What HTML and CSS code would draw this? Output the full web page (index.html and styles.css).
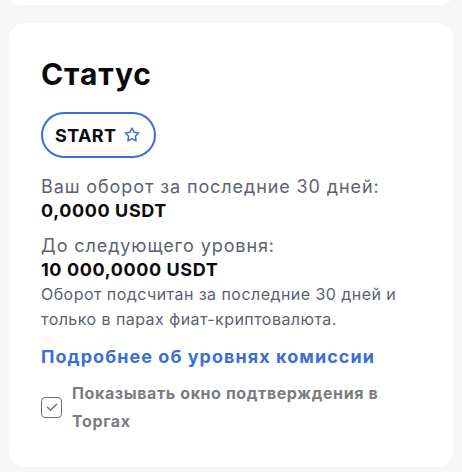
FILE: index.html
```html
<!DOCTYPE html>
<html lang="ru">
<head>
    <meta charset="UTF-8">
    <meta name="viewport" content="width=device-width, initial-scale=1.0">
    <title>Статус</title>
    <link rel="stylesheet" href="styles.css">
</head>
<body>
    <div class="card card-top"></div>

    <div class="card status">
        <h1>Статус</h1>

        <div class="badge">
            <span>START</span>
            <svg class="star" width="18" height="18" viewBox="0 0 24 24" fill="none" stroke="#3b6fd6" stroke-width="2" stroke-linejoin="round">
                <path d="M12 2.8l2.75 5.6 6.15.9-4.45 4.33 1.05 6.12L12 16.86l-5.5 2.89 1.05-6.12L3.1 9.3l6.15-.9z"/>
            </svg>
        </div>

        <div class="stat">
            <div class="stat-label">Ваш оборот за последние 30 дней:</div>
            <div class="stat-value">0,0000 USDT</div>
        </div>

        <div class="stat">
            <div class="stat-label">До следующего уровня:</div>
            <div class="stat-value">10 000,0000 USDT</div>
        </div>

        <p class="note">Оборот подсчитан за последние 30 дней и только в парах фиат-криптовалюта.</p>

        <a href="#" class="link">Подробнее об уровнях комиссии</a>

        <label class="check">
            <span class="box">
                <svg width="14" height="14" viewBox="0 0 14 14" fill="none" stroke="#6b6e76" stroke-width="1.4" stroke-linecap="round" stroke-linejoin="round">
                    <path d="M2.5 7.3l3 2.9L11.5 4.2"/>
                </svg>
            </span>
            <span class="check-text">Показывать окно подтверждения в Торгах</span>
        </label>
    </div>
</body>
</html>
```

FILE: styles.css
```css
body, html {
    margin: 0;
    padding: 0;
    font-family: Inter, 'Noto Sans', sans-serif;
    background-color: #f7f7f7;
}

body {
    padding: 0 9px;
}

.card {
    background: #ffffff;
    border-radius: 16px;
}

.card-top {
    height: 25px;
    margin-top: -20px;
}

.status {
    margin-top: 18px;
    padding: 31px 32px 0 32px;
    height: 444px;
    box-sizing: border-box;
}

h1 {
    margin: 0;
    font-size: 30px;
    font-weight: 700;
    color: #0b0b0d;
    line-height: 40px;
    letter-spacing: 0.9px;
}

.badge {
    display: inline-flex;
    align-items: center;
    gap: 7px;
    margin-top: 18px;
    height: 42px;
    padding: 0 13px 0 12px;
    border: 2px solid #3b6fd6;
    border-radius: 24px;
}

.badge span {
    font-size: 18px;
    font-weight: 700;
    color: #0b0b0d;
    letter-spacing: 0.4px;
}

.star {
    display: block;
}

.stat {
    margin-top: 17px;
}

.stat + .stat {
    margin-top: 12px;
}

.stat-label {
    font-size: 18px;
    line-height: 24px;
    color: #5c6270;
    letter-spacing: 0.9px;
}

.stat-value {
    font-size: 18px;
    line-height: 23px;
    font-weight: 700;
    color: #0b0b0d;
    letter-spacing: 0.6px;
}

.note {
    margin: 1px 0 0;
    font-size: 16px;
    line-height: 25px;
    color: #5c6270;
    letter-spacing: 0.45px;
}

.link {
    display: block;
    margin-top: 13px;
    font-size: 18px;
    line-height: 24px;
    font-weight: 700;
    color: #3b6fd6;
    text-decoration: none;
    letter-spacing: 1.05px;
}

.check {
    display: flex;
    align-items: center;
    gap: 10px;
    margin-top: 10px;
}

.box {
    flex: none;
    width: 19px;
    height: 19px;
    border: 1.5px solid #6b6e76;
    border-radius: 4px;
    display: flex;
    align-items: center;
    justify-content: center;
}

.check-text {
    max-width: 330px;
    font-size: 16px;
    line-height: 28px;
    font-weight: 700;
    color: #7b7c82;
    letter-spacing: 0.6px;
}
```
